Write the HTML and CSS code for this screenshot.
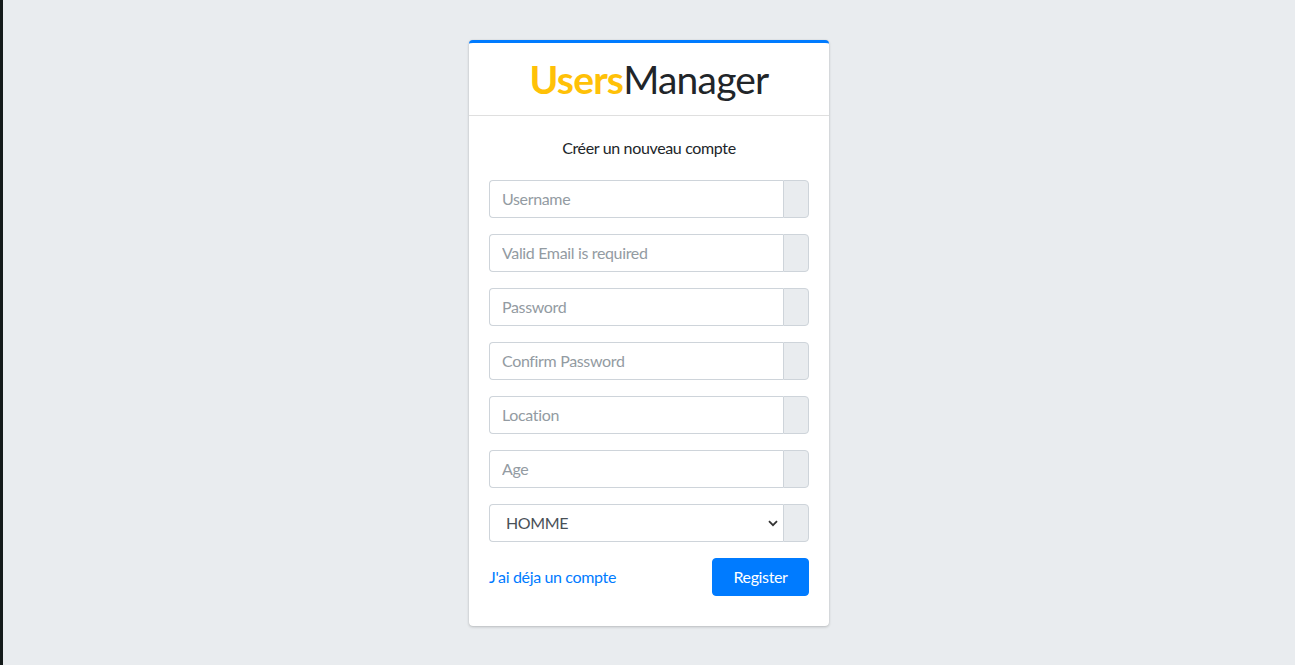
FILE: index.html
```html
<!DOCTYPE html>
<html lang="fr">
<head>
<meta charset="utf-8">
<title>UsersManager</title>
<link rel="stylesheet" href="styles.css">
</head>
<body>
<div class="login-box">
  <div class="card">
    <div class="card-header">
      <h1 class="logo"><b>Users</b>Manager</h1>
    </div>
    <div class="card-body">
      <p class="msg">Créer un nouveau compte</p>
      <form class="form">
        <div class="input-group">
          <input class="form-control" type="text" placeholder="Username">
          <span class="append"></span>
        </div>
        <div class="input-group">
          <input class="form-control" type="email" placeholder="Valid Email is required">
          <span class="append"></span>
        </div>
        <div class="input-group">
          <input class="form-control" type="password" placeholder="Password">
          <span class="append"></span>
        </div>
        <div class="input-group">
          <input class="form-control" type="password" placeholder="Confirm Password">
          <span class="append"></span>
        </div>
        <div class="input-group">
          <input class="form-control" type="text" placeholder="Location">
          <span class="append"></span>
        </div>
        <div class="input-group">
          <input class="form-control" type="text" placeholder="Age">
          <span class="append"></span>
        </div>
        <div class="input-group">
          <div class="select-wrap">
            <select class="form-control select">
              <option>HOMME</option>
              <option>FEMME</option>
            </select>
            <svg class="chev" width="10" height="7" viewBox="0 0 10 7"><path d="M1 1.2 L5 5.2 L9 1.2" fill="none" stroke="#333" stroke-width="1.8"/></svg>
          </div>
          <span class="append"></span>
        </div>
        <div class="actions">
          <a class="link" href="#">J'ai déja un compte</a>
          <button class="btn" type="button">Register</button>
        </div>
      </form>
    </div>
  </div>
</div>
</body>
</html>
```
FILE: styles.css
```css
* { box-sizing: border-box; }
html, body { height: 100%; }
body {
  margin: 0;
  background: #e9ecef;
  border-left: 3px solid #141a1a;
  font-family: "Source Sans Pro", Lato, "Liberation Sans", sans-serif;
  font-size: 16px;
  letter-spacing: -0.35px;
  color: #212529;
  display: flex;
  align-items: center;
  justify-content: center;
}
.login-box { width: 360px; }
.card {
  background: #fff;
  border-top: 3px solid #007bff;
  border-radius: 4px;
  box-shadow: 0 0 1px rgba(0,0,0,.125), 0 1px 3px rgba(0,0,0,.2);
}
.card-header {
  padding: 12px 20px;
  border-bottom: 1px solid rgba(0,0,0,.125);
  text-align: center;
}
.logo {
  margin: 0;
  font-size: 39px;
  line-height: 48px;
  font-weight: 400;
  letter-spacing: -0.8px;
  color: #212529;
}
.logo b { color: #ffc107; font-weight: 700; }
.card-body { padding: 20px 20px 30px; }
.msg {
  margin: 0;
  padding: 0 20px 20px;
  text-align: center;
  line-height: 24px;
}
.input-group { display: flex; margin-bottom: 16px; height: 38px; }
.form-control {
  flex: 1;
  min-width: 0;
  height: 38px;
  padding: 6px 12px;
  font-family: inherit;
  font-size: 16px;
  letter-spacing: -0.35px;
  color: #495057;
  background: #fff;
  border: 1px solid #ced4da;
  border-right: 0;
  border-radius: 4px 0 0 4px;
  outline: none;
}
.form-control::placeholder { color: #939ba2; opacity: 1; }
.append {
  width: 26px;
  background: #e9ecef;
  border: 1px solid #ced4da;
  border-radius: 0 4px 4px 0;
}
.select-wrap { flex: 1; position: relative; display: flex; }
.select {
  appearance: none;
  -webkit-appearance: none;
  padding-left: 16px;
  color: #495057;
}
.chev { position: absolute; right: 5px; top: 16px; pointer-events: none; }
.actions {
  display: flex;
  justify-content: space-between;
  align-items: center;
}
.link { color: #007bff; text-decoration: none; line-height: 24px; }
.btn {
  width: 97px;
  height: 38px;
  background: #007bff;
  color: #fff;
  border: 1px solid #007bff;
  border-radius: 4px;
  font-family: inherit;
  font-size: 16px;
  letter-spacing: -0.35px;
}
```
